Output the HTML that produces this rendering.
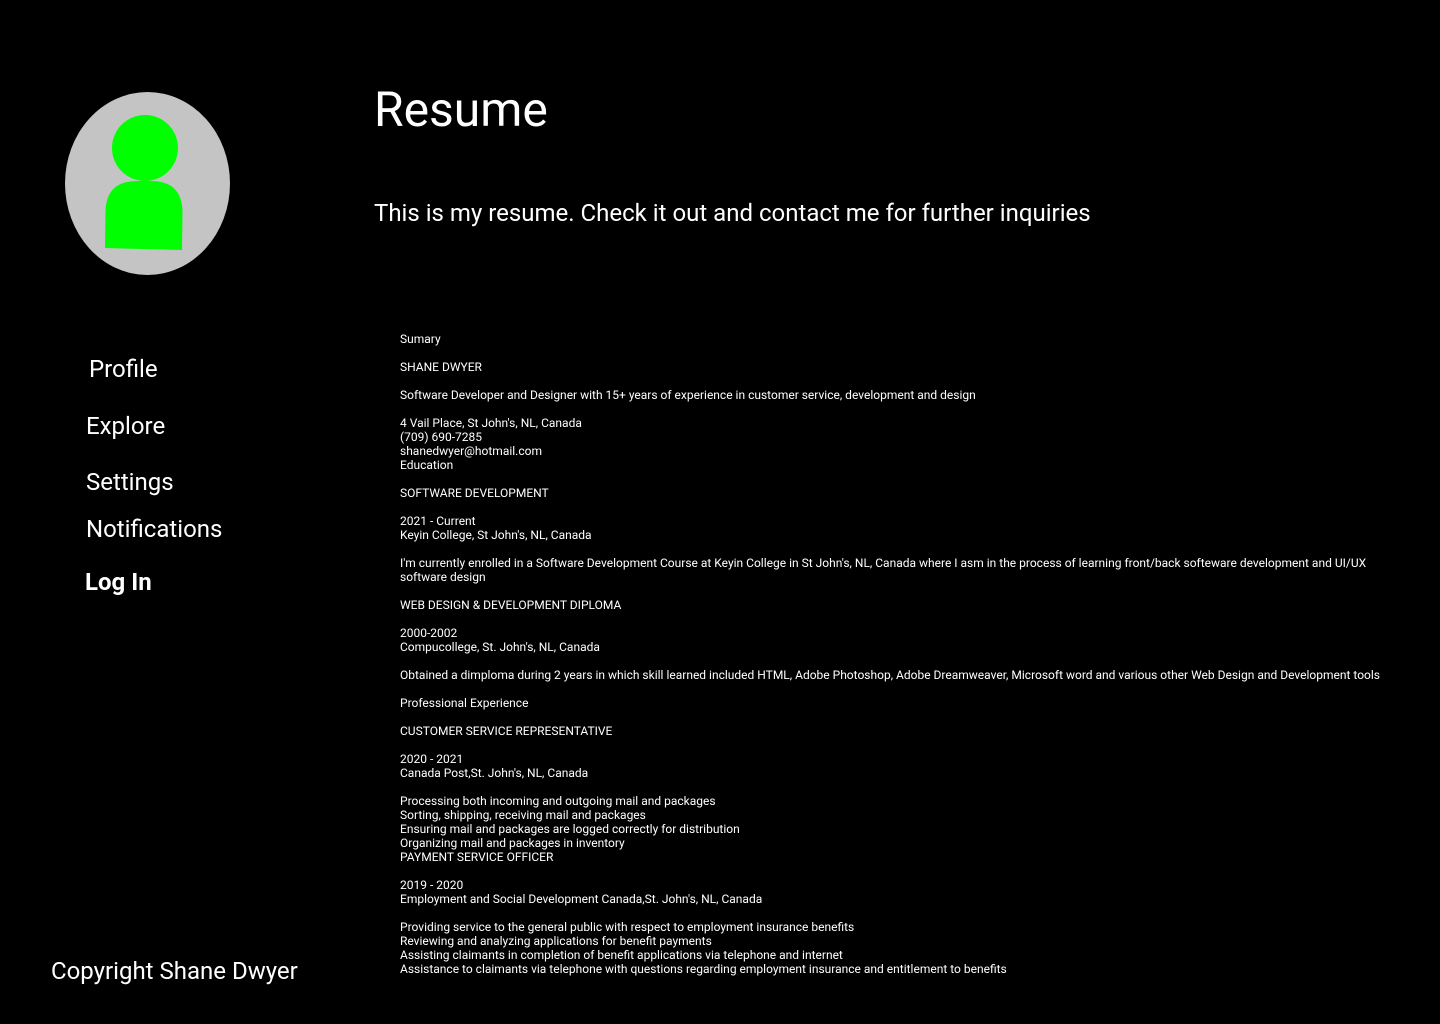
<!DOCTYPE html>
<html><head><meta charset="utf-8"><style>
body{margin:0;background:#000;width:1440px;height:1024px;overflow:hidden;font-family:"Roboto","Liberation Sans",sans-serif;color:#fff;position:relative}
.a{position:absolute;white-space:nowrap}
.nav{font-size:24px;line-height:28px}
#r{left:400px;top:332px;font-size:12px;line-height:14px}
</style></head><body>
<svg class="a" style="left:0;top:0" width="300" height="300">
<ellipse cx="147.5" cy="183.5" rx="82.5" ry="91.5" fill="#c4c4c4"/>
<circle cx="145" cy="148" r="33" fill="#00ff00"/>
<path d="M105 248 L105.5 212 Q106 181 137 181 L151 181 Q182 181 182.5 212 L182 250 Z" fill="#00ff00"/>
</svg>
<div class="a" style="left:374px;top:82px;font-size:48px;line-height:56px">Resume</div>
<div class="a" style="left:374px;top:198px;font-size:24px;line-height:30px">This is my resume. Check it out and contact me for further inquiries</div>
<div class="a nav" style="left:89px;top:355px">Profile</div>
<div class="a nav" style="left:86px;top:412px">Explore</div>
<div class="a nav" style="left:86px;top:468px">Settings</div>
<div class="a nav" style="left:86px;top:515px">Notifications</div>
<div class="a nav" style="left:85px;top:568px;font-weight:bold">Log In</div>
<div class="a nav" style="left:51px;top:957px">Copyright Shane Dwyer</div>
<div class="a" id="r">Sumary<br><br>SHANE DWYER<br><br>Software Developer and Designer with 15+ years of experience in customer service, development and design<br><br>4 Vail Place, St John's, NL, Canada<br>(709) 690-7285<br>shanedwyer@hotmail.com<br>Education<br><br>SOFTWARE DEVELOPMENT<br><br>2021 - Current<br>Keyin College, St John's, NL, Canada<br><br>I'm currently enrolled in a Software Development Course at Keyin College in St John's, NL, Canada where I asm in the process of learning front/back softeware development and UI/UX<br>software design<br><br>WEB DESIGN &amp; DEVELOPMENT DIPLOMA<br><br>2000-2002<br>Compucollege, St. John's, NL, Canada<br><br>Obtained a dimploma during 2 years in which skill learned included HTML, Adobe Photoshop, Adobe Dreamweaver, Microsoft word and various other Web Design and Development tools<br><br>Professional Experience<br><br>CUSTOMER SERVICE REPRESENTATIVE<br><br>2020 - 2021<br>Canada Post,St. John's, NL, Canada<br><br>Processing both incoming and outgoing mail and packages<br>Sorting, shipping, receiving mail and packages<br>Ensuring mail and packages are logged correctly for distribution<br>Organizing mail and packages in inventory<br>PAYMENT SERVICE OFFICER<br><br>2019 - 2020<br>Employment and Social Development Canada,St. John's, NL, Canada<br><br>Providing service to the general public with respect to employment insurance benefits<br>Reviewing and analyzing applications for benefit payments<br>Assisting claimants in completion of benefit applications via telephone and internet<br>Assistance to claimants via telephone with questions regarding employment insurance and entitlement to benefits</div>
</body></html>
